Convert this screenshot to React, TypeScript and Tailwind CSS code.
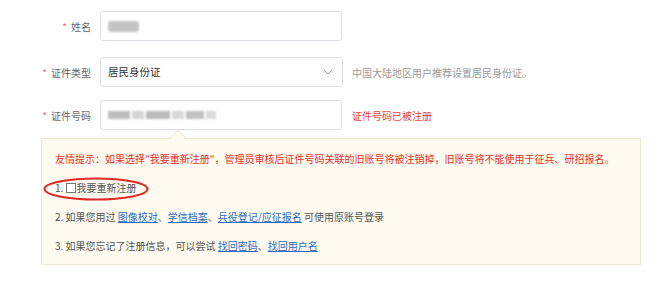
import React from "react";

const font = { fontFamily: '"Noto Sans CJK SC", "Noto Sans", sans-serif' };

function Label({ text }: { text: string }) {
  return (
    <div className="w-[91px] shrink-0 pr-0 text-right text-[10px] text-[#666] mr-[9px]">
      <span className="text-[#f56c6c] mr-[4px]">*</span>
      {text}
    </div>
  );
}

export default function App() {
  return (
    <div className="w-[672px] h-[290px] bg-white relative overflow-hidden" style={font}>
      <div className="pt-[11px]">
        {/* Row 1 */}
        <div className="flex items-center h-[30px]">
          <Label text="姓名" />
          <div className="w-[242px] h-[30px] border border-[#dcdfe6] rounded-[3px] flex items-center pl-[7px]">
            <div className="w-[31px] h-[11px] rounded-[3px] bg-[#c4c4c4] blur-[1px]" />
          </div>
        </div>
        {/* Row 2 */}
        <div className="flex items-center h-[30px] mt-[16px]">
          <Label text="证件类型" />
          <div className="w-[243px] h-[30px] border border-[#dcdfe6] rounded-[3px] flex items-center justify-between pl-[7px] pr-[9px]">
            <span className="text-[10.5px] text-[#333]">居民身份证</span>
            <svg width="10" height="6" viewBox="0 0 10 6" fill="none">
              <path d="M1 1l4 4 4-4" stroke="#999" strokeWidth="1" />
            </svg>
          </div>
          <span className="ml-[9px] text-[10px] text-[#999]">中国大陆地区用户推荐设置居民身份证。</span>
        </div>
        {/* Row 3 */}
        <div className="flex items-center h-[30px] mt-[13px]">
          <Label text="证件号码" />
          <div className="w-[242px] h-[30px] border border-[#dcdfe6] rounded-[3px] flex items-center pl-[7px] gap-[2px]">
            <div className="w-[22px] h-[8px] bg-[#bdbdbd] blur-[1px]" />
            <div className="w-[12px] h-[8px] bg-[#d5d5d5] blur-[1px]" />
            <div className="w-[24px] h-[8px] bg-[#bbbbbb] blur-[1px]" />
            <div className="w-[12px] h-[8px] bg-[#d8d8d8] blur-[1px]" />
            <div className="w-[18px] h-[8px] bg-[#c0c0c0] blur-[1px]" />
            <div className="w-[10px] h-[8px] bg-[#dadada] blur-[1px]" />
          </div>
          <span className="ml-[10px] text-[10px] text-[#e64340]">证件号码已被注册</span>
        </div>

        {/* Panel */}
        <div className="relative ml-[41px] mt-[8px] w-[600px] border border-[#f2ead3] bg-[#fffbf0] pl-[13px] pt-[5px] pb-[4px] text-[10px] leading-[29px] text-[#555]">
          {/* arrow */}
          <div className="absolute -top-[7px] left-[130px] w-[12px] h-[12px] rotate-45 border-l border-t border-[#f2ead3] bg-[#fffbf0]" />
          <div className="relative text-[#e3332d]">
            友情提示：如果选择"我要重新注册"，管理员审核后证件号码关联的旧账号将被注销掉，旧账号将不能使用于征兵、研招报名。
          </div>
          <div className="relative flex items-center">
            <span>1.&nbsp;</span>
            <span className="inline-block w-[10px] h-[10px] border border-[#777] bg-white mr-[1px]" />
            <span>我要重新注册</span>
          </div>
          <div className="relative">
            2. 如果您用过 <a className="text-[#2a6bc0] underline">图像校对</a>、<a className="text-[#2a6bc0] underline">学信档案</a>、<a className="text-[#2a6bc0] underline">兵役登记/应征报名</a> 可使用原账号登录
          </div>
          <div className="relative">
            3. 如果您忘记了注册信息，可以尝试 <a className="text-[#2a6bc0] underline">找回密码</a>、<a className="text-[#2a6bc0] underline">找回用户名</a>
          </div>
        </div>
      </div>

      {/* red ellipse */}
      <svg className="absolute left-[42px] top-[176px]" width="110" height="26" viewBox="0 0 110 26">
        <ellipse cx="54" cy="13" rx="51.5" ry="10.5" fill="none" stroke="#e22a2a" strokeWidth="2" />
      </svg>
    </div>
  );
}
